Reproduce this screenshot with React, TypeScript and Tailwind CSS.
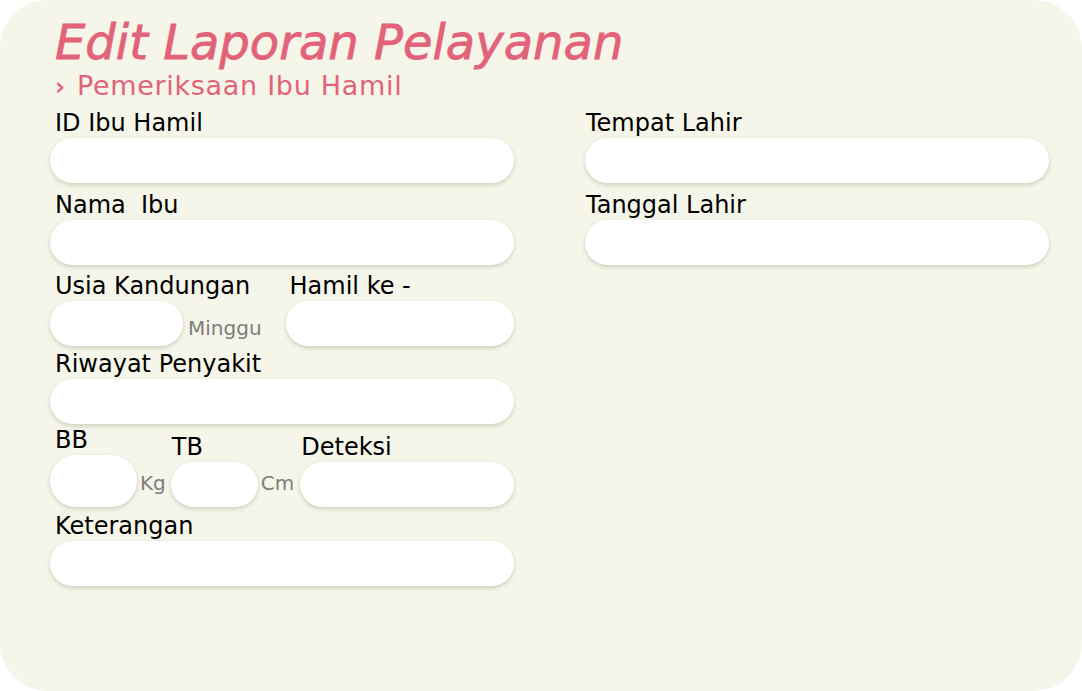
import React from 'react';

const font = { fontFamily: '"DejaVu Sans", "Noto Sans", sans-serif' };

const Input: React.FC<{ className?: string }> = ({ className = '' }) => (
  <div className={`h-[45px] rounded-full bg-white shadow-[0_2px_4px_rgba(110,110,80,0.28)] ${className}`} />
);

const Label: React.FC<{ children: React.ReactNode; className?: string }> = ({ children, className = '' }) => (
  <div className={`text-[24px] leading-[30px] text-black whitespace-pre ${className}`}>{children}</div>
);

const Unit: React.FC<{ children: React.ReactNode; className?: string }> = ({ children, className = '' }) => (
  <span className={`text-[20px] leading-none text-[#7d7d7d] ${className}`}>{children}</span>
);

export default function App() {
  return (
    <div className="w-[1082px] h-[691px] bg-white" style={font}>
      <div className="w-full h-full bg-[#f5f5e9] rounded-[48px] pl-[50px] pt-[12px]">
        {/* Header */}
        <h1 className="pl-[5px] text-[48px] leading-[60px] italic text-[#e26379] [-webkit-text-stroke:0.8px_#e26379]">
          Edit Laporan Pelayanan
        </h1>
        <div className="pl-[5px] h-[28px] text-[27px] leading-[28px] tracking-[0.7px] text-[#e26379]">
          <span className="font-bold text-[24px] leading-none mr-[2px]">›</span> Pemeriksaan Ibu Hamil
        </div>

        <div className="flex gap-[71px] mt-[8px]">
          {/* Left column */}
          <div className="w-[464px] flex flex-col">
            <Label className="pl-[5px]">ID Ibu Hamil</Label>
            <Input />

            <Label className="pl-[5px] mt-[7px]">Nama  Ibu</Label>
            <Input />

            <div className="flex mt-[6px]">
              <div className="flex flex-col">
                <Label className="pl-[5px]">Usia Kandungan</Label>
                <div className="flex items-center">
                  <Input className="w-[133px]" />
                  <Unit className="ml-[5px] mt-[8px]">Minggu</Unit>
                </div>
              </div>
              <div className="flex flex-col flex-1 ml-[24px]">
                <Label className="pl-[4px]">Hamil ke -</Label>
                <Input />
              </div>
            </div>

            <Label className="pl-[5px] mt-[3px]">Riwayat Penyakit</Label>
            <Input />

            <div className="flex items-end mt-[1px]">
              <div className="flex flex-col">
                <Label className="pl-[5px]">BB</Label>
                <Input className="w-[87px] h-[52px]" />
              </div>
              <Unit className="ml-[3px] mb-[14px]">Kg</Unit>
              <div className="flex flex-col ml-[5px]">
                <Label className="pl-[1px]">TB</Label>
                <Input className="w-[87px]" />
              </div>
              <Unit className="ml-[3px] mb-[14px]">Cm</Unit>
              <div className="flex flex-col flex-1 ml-[6px]">
                <Label className="pl-[1px]">Deteksi</Label>
                <Input />
              </div>
            </div>

            <Label className="pl-[5px] mt-[4px]">Keterangan</Label>
            <Input />
          </div>

          {/* Right column */}
          <div className="w-[464px] flex flex-col">
            <Label className="pl-[1px]">Tempat Lahir</Label>
            <Input />

            <Label className="pl-[1px] mt-[7px]">Tanggal Lahir</Label>
            <Input />
          </div>
        </div>
      </div>
    </div>
  );
}
